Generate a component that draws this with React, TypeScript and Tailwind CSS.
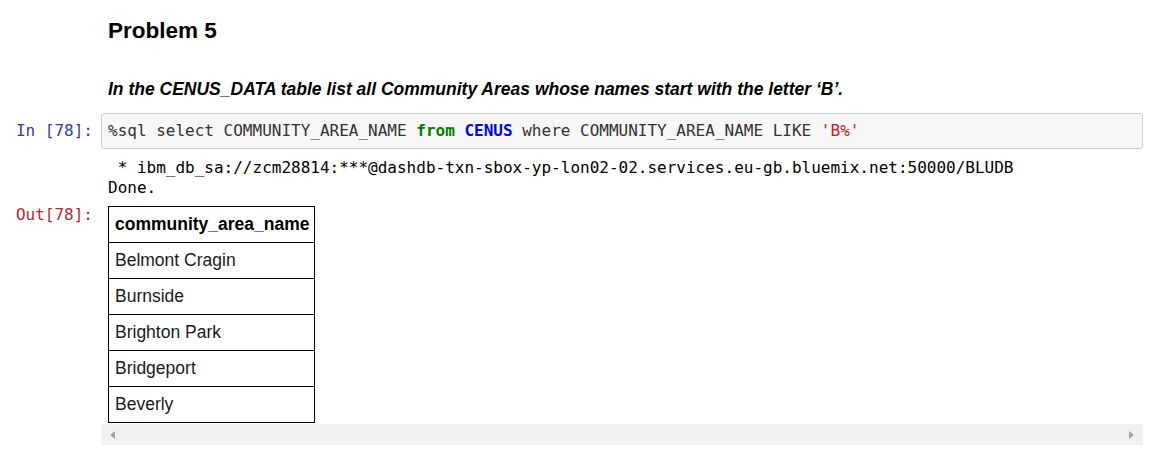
import React from 'react';

const rows = ['Belmont Cragin', 'Burnside', 'Brighton Park', 'Bridgeport', 'Beverly'];

const mono = { fontFamily: '"DejaVu Sans Mono", "Liberation Mono", monospace' };

export default function App() {
  return (
    <div className="w-[1165px] h-[461px] bg-white overflow-hidden font-['Liberation_Sans',Arial,sans-serif] text-black">
      {/* markdown cell */}
      <div className="pl-[108px] pt-[17px]">
        <h3 className="text-[22.5px] font-bold leading-[28px]">Problem 5</h3>
        <p className="mt-[34px] text-[17.5px] font-bold italic leading-[20px]">
          In the CENUS_DATA table list all Community Areas whose names start with the letter ‘B’.
        </p>
      </div>

      {/* code cell */}
      <div className="flex mt-[14px] pr-[22px]">
        <div className="w-[101px] shrink-0 pr-[8px] text-right text-[16px] leading-[36px] text-[#303f9f]" style={mono}>
          In&nbsp;[78]:
        </div>
        <div
          className="flex-1 h-[36px] border border-[#cfcfcf] rounded-[3px] bg-[#f7f7f7] pl-[6px] text-[16px] leading-[34px] text-[#333] whitespace-pre"
          style={mono}
        >
          %sql select COMMUNITY_AREA_NAME <span className="font-bold text-[#008000]">from</span>{' '}
          <span className="font-bold text-[#0000ff]">CENUS</span> where COMMUNITY_AREA_NAME LIKE{' '}
          <span className="text-[#ba2121]">'B%'</span>
        </div>
      </div>

      {/* stdout */}
      <div className="pl-[108px] pt-[9px] text-[16px] leading-[20px] text-black whitespace-pre" style={mono}>
        <div> * ibm_db_sa://zcm28814:***@dashdb-txn-sbox-yp-lon02-02.services.eu-gb.bluemix.net:50000/BLUDB</div>
        <div>Done.</div>
      </div>

      {/* result */}
      <div className="flex mt-[8px] pr-[20px]">
        <div className="w-[101px] shrink-0 pr-[8px] text-right text-[16px] leading-[18px] text-[#b22b31]" style={mono}>
          Out[78]:
        </div>
        <div className="flex-1 flex flex-col items-start">
          <table className="ml-[7px] border-collapse text-[17.5px] leading-[17.5px]">
            <thead>
              <tr>
                <th className="border border-black h-[36px] pl-[6px] pr-[4px] text-left font-bold">community_area_name</th>
              </tr>
            </thead>
            <tbody>
              {rows.map((r) => (
                <tr key={r}>
                  <td className="border border-black h-[36px] pl-[6px] pr-[4px] text-left text-[#1a1a1a]">{r}</td>
                </tr>
              ))}
            </tbody>
          </table>
          <div className="mt-[1px] h-[21px] w-[1042px] bg-[#f1f1f1] flex items-center justify-between px-[9px]">
            <svg width="5" height="8" viewBox="0 0 5 8"><path d="M5 0 L0 4 L5 8 Z" fill="#a3a3a3" /></svg>
            <svg width="5" height="8" viewBox="0 0 5 8"><path d="M0 0 L5 4 L0 8 Z" fill="#a3a3a3" /></svg>
          </div>
        </div>
      </div>
    </div>
  );
}
